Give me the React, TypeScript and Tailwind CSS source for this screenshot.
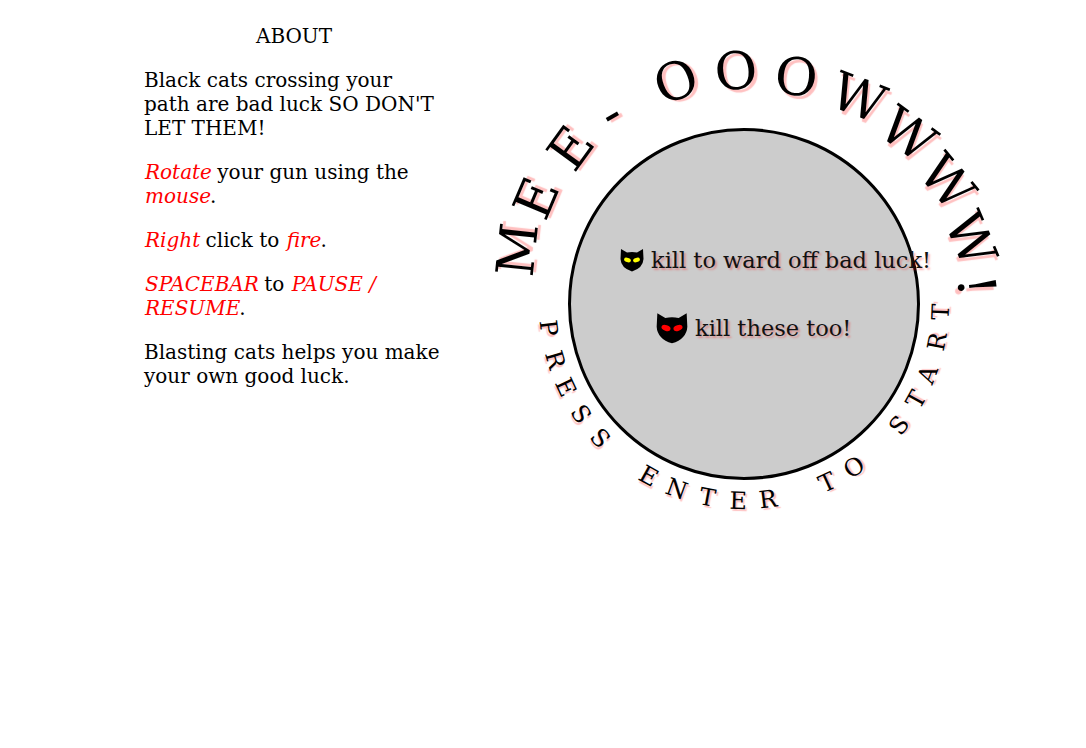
// [char, angle on the ring from the top, radius, rotation of the glyph]
const topLetters: [string, number, number, number][] = [
  ["M", -76.5, 233, -84],
  ["E", -63, 233, -67],
  ["E", -48, 233, -54],
  ["-", -35, 233, -30],
  ["O", -17, 233, -21],
  ["O", -2, 233, -7],
  ["O", 13, 233, 6],
  ["W", 29, 236, 21],
  ["W", 44, 236, 36],
  ["W", 59, 237, 50],
  ["W", 74, 236, 67],
  ["!", 85.5, 233, 83],
];

// [char, angle from the bottom in degrees]
const bottomLetters: [string, number][] = [
  ["P", -83], ["R", -73.5], ["E", -65], ["S", -56], ["S", -47],
  ["E", -29], ["N", -20], ["T", -10.7], ["E", -1.7], ["R", 7],
  ["T", 25], ["O", 34],
  ["S", 52], ["T", 61], ["A", 69], ["R", 79], ["T", 87.7],
];

function Cat({ eye, className }: { eye: string; className: string }) {
  return (
    <svg viewBox="0 0 24 24" className={className}>
      <path
        d="M1 1 L7 4.5 Q12 3.5 17 4.5 L23 1 L23.5 11 Q23 20 12 23.5 Q1 20 0.5 11 Z"
        fill="#000"
      />
      <ellipse cx="7.5" cy="12" rx="3.5" ry="2.1" fill={eye} transform="rotate(18 7.5 12)" />
      <ellipse cx="16.5" cy="12" rx="3.5" ry="2.1" fill={eye} transform="rotate(-18 16.5 12)" />
    </svg>
  );
}

export default function App() {
  return (
    <div className="flex min-h-[748px] gap-[124px] bg-white pl-[144px] font-['DejaVu_Serif',serif] text-[20px] leading-6 text-black">
      <div className="flex w-[300px] flex-col gap-5 pt-6">
        <p className="text-center">ABOUT</p>
        <p>Black cats crossing your path are bad luck SO DON'T LET THEM!</p>
        <p>
          <em className="relative left-px text-[#f00]">Rotate</em> your gun using the{" "}
          <em className="relative left-px text-[#f00]">mouse</em>.
        </p>
        <p>
          <em className="relative left-px text-[#f00]">Right</em> click to{" "}
          <em className="relative left-px text-[#f00]">fire</em>.
        </p>
        <p>
          <em className="relative left-px text-[#f00]">SPACEBAR</em> to{" "}
          <em className="relative left-px text-[#f00]">PAUSE / RESUME</em>.
        </p>
        <p>Blasting cats helps you make your own good luck.</p>
      </div>

      <div className="relative mt-[128px] h-[352px] w-[352px]">
        <div className="flex h-full w-full flex-col rounded-full border-[3px] border-black bg-[#ccc] pt-[115px] [text-shadow:2px_2px_2px_rgba(255,0,0,0.3)]">
          <div className="ml-[49px] flex items-center gap-[7px] whitespace-nowrap text-[22.5px] leading-7 text-[#111]">
            <Cat eye="#ff0" className="h-[24px] w-[24px] shrink-0" />
            <span>kill to ward off bad luck!</span>
          </div>
          <div className="ml-[85px] mt-[38px] flex items-center gap-[7px] whitespace-nowrap text-[22.5px] leading-7 text-[#111]">
            <Cat eye="#f00" className="h-[32px] w-[32px] shrink-0 blur-[0.5px]" />
            <span>kill these too!</span>
          </div>
        </div>

        {/* letters around the ring */}
        <div className="absolute left-1/2 top-1/2 text-[52px] leading-none [text-shadow:3px_3px_1px_rgba(255,0,0,0.25)]">
          {topLetters.map(([c, a, r, rot], i) => (
            <span
              key={i}
              className="absolute left-0 top-0"
              style={{
                transform: `translate(-50%,-50%) rotate(${a}deg) translateY(${-r}px) rotate(${rot - a}deg)`,
              }}
            >
              {c}
            </span>
          ))}
        </div>
        <div className="absolute left-1/2 top-1/2 text-[24px] leading-none [text-shadow:2px_2px_1px_rgba(255,0,0,0.25)]">
          {bottomLetters.map(([c, a], i) => (
            <span
              key={i}
              className="absolute left-0 top-0"
              style={{ transform: `translate(-50%,-50%) rotate(${-a}deg) translateY(197px)` }}
            >
              {c}
            </span>
          ))}
        </div>
      </div>
    </div>
  );
}
